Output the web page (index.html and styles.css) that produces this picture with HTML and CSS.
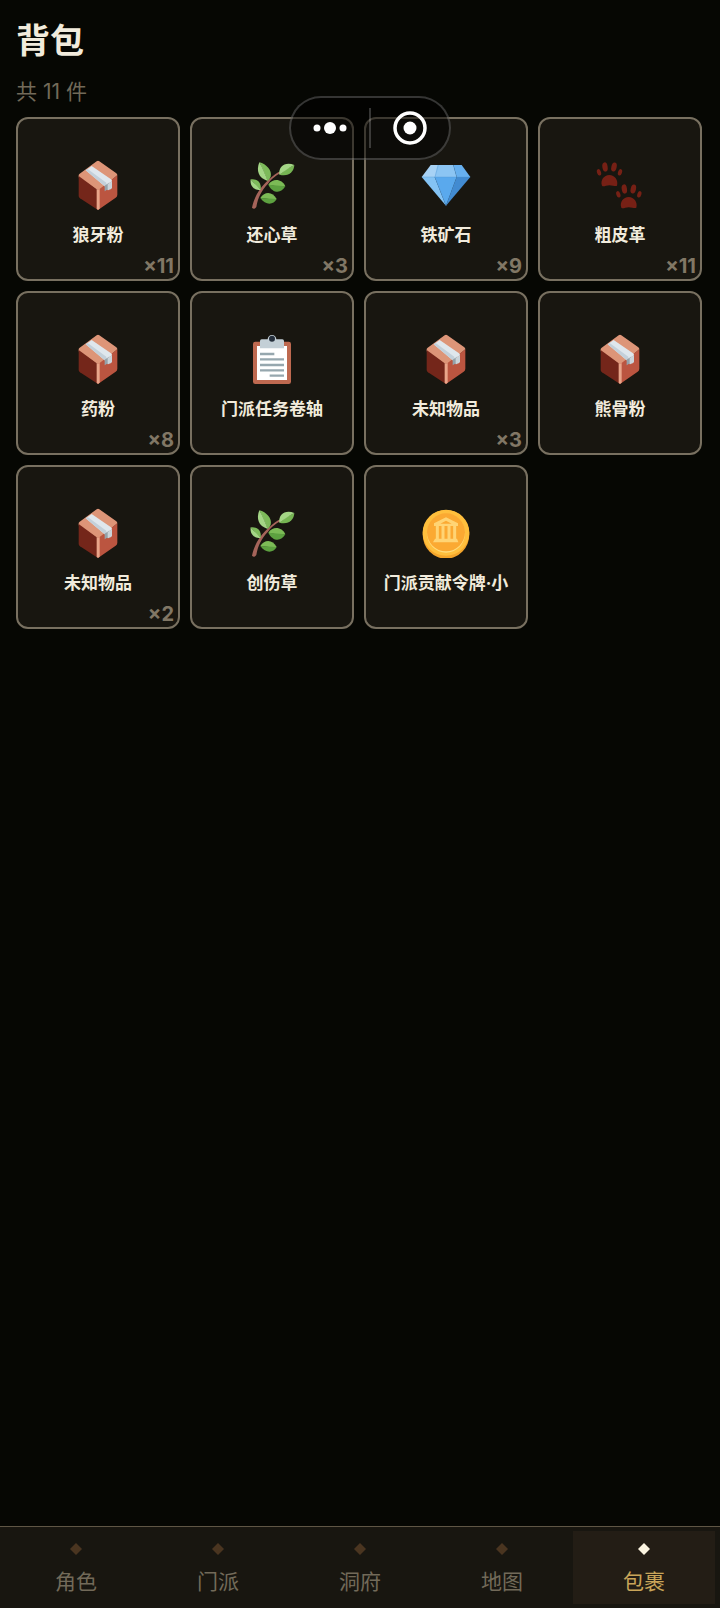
FILE: index.html
```html
<!DOCTYPE html>
<html lang="zh-CN">
<head>
  <meta charset="UTF-8">
  <meta name="viewport" content="width=device-width, initial-scale=1.0">
  <title>背包</title>
  <link rel="stylesheet" href="styles.css">
</head>
<body>
  <!-- Item icons -->
  <svg class="sprite" aria-hidden="true">
    <symbol id="icon-box" viewBox="15 30 150 150">
      <path fill="#dd9578" d="M86 34Q90 31 94 34L145 70Q148 73 148 76L92 124 32 82V76Q32 73 35 71Z"/>
      <path fill="#74261a" d="M32 78 90 121V180L36 145Q32 142 32 138Z"/>
      <path fill="#bb5540" d="M90 121 148 76V134Q148 140 143 143L90 180Z"/>
      <path fill="#e9a58a" d="M86 117 90 120 95 117V176L90 180 86 177Z"/>
      <path fill="#dfe7ed" d="M53 61 71 48 129 88Q132 90 132 94L110 109Z"/>
      <path fill="#c3d0da" d="M53 61 59 57 115 98V106L110 109Z"/>
      <path fill="#94a2aa" d="M110 107 123 98V121L117 119 110 124Z"/>
      <path fill="#cbd4da" d="M119 102 132 93V112Q132 116 128 118L119 121Z"/>
    </symbol>
    <symbol id="icon-herb" viewBox="21 30 150 150">
      <path fill="#a5645a" d="M36 173C44 135 64 108 86 89 100 77 111 67 124 63L127 67C108 76 96 86 84 101 64 122 54 142 49 171Q43 180 36 173Z"/>
      <path fill="#7dba5a" d="M58 37C79 42 97 62 92 80Q89 88 83 93C76 77 68 57 58 37Z"/>
      <path fill="#a4d686" d="M58 37C68 54 77 77 83 93 55 84 48 62 58 37Z"/>
      <path fill="#76b553" d="M163 45C162 66 146 81 118 74L138 58Z"/>
      <path fill="#a4d686" d="M118 74C115 49 136 34 163 45 146 54 132 64 118 74Z"/>
      <path fill="#7dba5a" d="M32 88C53 85 65 100 62 119L47 106Z"/>
      <path fill="#a4d686" d="M32 88C41 99 52 109 62 119 44 123 29 109 32 88Z"/>
      <path fill="#7cbb56" d="M85 104C98 84 126 86 136 109L109 109Z"/>
      <path fill="#5da140" d="M85 104 136 109C124 131 99 132 85 104Z"/>
      <path fill="#7cbb56" d="M61 144C74 123 98 124 110 147L87 147Z"/>
      <path fill="#5da140" d="M61 144 110 147C100 166 76 166 61 144Z"/>
    </symbol>
    <symbol id="icon-gem" viewBox="27 30 150 150">
      <path fill="#a7d2f5" d="M56 45H82L70 81H29Z"/>
      <path fill="#8cc5f3" d="M76 45H124L134 81H68Z"/>
      <path fill="#67b0ef" d="M124 45H149L175 81H134Z"/>
      <path fill="#84c3f4" d="M29 81H68L102 167Z"/>
      <path fill="#5aa9ed" d="M68 81H134L102 167Z"/>
      <path fill="#428bd1" d="M134 81H175L102 167Z"/>
      <path fill="none" stroke="#4c93cf" d="M29 81H175M79 45 69 81 102 167 134 81 124 45"/>
    </symbol>
    <symbol id="icon-paws" viewBox="15 30 150 150">
      <g id="paw" fill="#762015">
        <ellipse cx="45" cy="51" rx="8" ry="14" transform="rotate(-8 45 51)"/>
        <ellipse cx="72" cy="51" rx="8" ry="14" transform="rotate(12 72 51)"/>
        <ellipse cx="27" cy="67" rx="6" ry="10" transform="rotate(-18 27 67)"/>
        <ellipse cx="90" cy="67" rx="6" ry="10" transform="rotate(18 90 67)"/>
        <path d="M36 107C30 91 42 75 58 75S86 91 81 107Q78 109 69 107 58 105 48 107 39 110 36 107Z"/>
      </g>
      <use href="#paw" x="58" y="66"/>
    </symbol>
    <symbol id="icon-clipboard" viewBox="15 27 150 150">
      <rect x="33" y="50" width="114" height="127" rx="7" fill="#be6950"/>
      <path fill="#fff" d="M45 63H135V165H45Z"/>
      <path fill="#c3cfd6" d="M54 48Q54 43 59 43H77A13 13 0 0 1 103 43H121Q126 43 126 48V70H54Z"/>
      <circle cx="90" cy="41" r="9" fill="#252f3c"/>
      <path fill="none" stroke="#96a7ae" stroke-width="7" d="M54 87H97M54 103H126M54 120H126M54 136H126M83 152H126"/>
    </symbol>
    <symbol id="icon-coin" viewBox="18 22 150 150">
      <ellipse cx="93" cy="101" rx="70" ry="73" fill="#f4a52b"/>
      <ellipse cx="93" cy="96" rx="70" ry="69" fill="#ffbf3d"/>
      <ellipse cx="93" cy="98" rx="57" ry="58" fill="#ffdc7c"/>
      <ellipse cx="93" cy="95" rx="57" ry="57" fill="#fba932"/>
      <path fill="#ffd474" fill-rule="evenodd" d="M93 50 129 68V76H57V68ZM93 60 76 69H110Z"/>
      <path fill="none" stroke="#ffd474" stroke-width="9" d="M67 76V116M84 76V116M102 76V116M119 76V116"/>
      <path fill="#ffd474" d="M60 114H126L130 125H54Z"/>
    </symbol>
    <symbol id="icon-diamond" viewBox="0 0 12 12">
      <path fill="currentColor" d="M6 0 12 6 6 12 0 6Z"/>
    </symbol>
  </svg>

  <div class="capsule">
    <button type="button" class="capsule-btn" aria-label="更多">
      <svg width="34" height="12" viewBox="0 0 34 12" fill="#fff"><circle cx="4" cy="6" r="3.5"/><circle cx="17" cy="6" r="6"/><circle cx="30" cy="6" r="3.5"/></svg>
    </button>
    <span class="capsule-line"></span>
    <button type="button" class="capsule-btn" aria-label="关闭">
      <svg width="34" height="34" viewBox="0 0 34 34"><circle cx="17" cy="17" r="15" fill="none" stroke="#fff" stroke-width="3.5"/><circle cx="17" cy="17" r="6.5" fill="#fff"/></svg>
    </button>
  </div>

  <main class="bag">
    <h1>背包</h1>
    <p class="total">共 11 件</p>
    <div class="items">
      <button type="button" class="item"><svg class="item-icon"><use href="#icon-box"/></svg><span class="item-name">狼牙粉</span><span class="item-count">×11</span></button>
      <button type="button" class="item"><svg class="item-icon"><use href="#icon-herb"/></svg><span class="item-name">还心草</span><span class="item-count">×3</span></button>
      <button type="button" class="item"><svg class="item-icon"><use href="#icon-gem"/></svg><span class="item-name">铁矿石</span><span class="item-count">×9</span></button>
      <button type="button" class="item"><svg class="item-icon"><use href="#icon-paws"/></svg><span class="item-name">粗皮革</span><span class="item-count">×11</span></button>
      <button type="button" class="item"><svg class="item-icon"><use href="#icon-box"/></svg><span class="item-name">药粉</span><span class="item-count">×8</span></button>
      <button type="button" class="item"><svg class="item-icon"><use href="#icon-clipboard"/></svg><span class="item-name">门派任务卷轴</span></button>
      <button type="button" class="item"><svg class="item-icon"><use href="#icon-box"/></svg><span class="item-name">未知物品</span><span class="item-count">×3</span></button>
      <button type="button" class="item"><svg class="item-icon"><use href="#icon-box"/></svg><span class="item-name">熊骨粉</span></button>
      <button type="button" class="item"><svg class="item-icon"><use href="#icon-box"/></svg><span class="item-name">未知物品</span><span class="item-count">×2</span></button>
      <button type="button" class="item"><svg class="item-icon"><use href="#icon-herb"/></svg><span class="item-name">创伤草</span></button>
      <button type="button" class="item"><svg class="item-icon"><use href="#icon-coin"/></svg><span class="item-name">门派贡献令牌·小</span></button>
    </div>
  </main>

  <nav class="tabs">
    <a href="#role"><svg class="tab-mark"><use href="#icon-diamond"/></svg>角色</a>
    <a href="#sect"><svg class="tab-mark"><use href="#icon-diamond"/></svg>门派</a>
    <a href="#cave"><svg class="tab-mark"><use href="#icon-diamond"/></svg>洞府</a>
    <a href="#map"><svg class="tab-mark"><use href="#icon-diamond"/></svg>地图</a>
    <a href="#bag" class="active"><svg class="tab-mark"><use href="#icon-diamond"/></svg>包裹</a>
  </nav>
</body>
</html>
```
FILE: styles.css
```css
* { box-sizing:border-box; }
body { margin:0; min-height:100vh; display:flex; flex-direction:column; background:#060703; color:#f1ebdc; font-family:Inter, "Noto Sans CJK SC", sans-serif; }
button { font:inherit; color:inherit; cursor:pointer; }
.sprite { position:absolute; width:0; height:0; }

.bag { flex:1; padding:19px 18px 20px 16px; }
.bag h1 { margin:0; font-size:34px; line-height:44px; font-weight:700; }
.total { margin:14px 0 10px; font-size:21px; line-height:30px; font-weight:400; color:#726a59; }
.items { display:grid; grid-template-columns:repeat(4, 1fr); gap:10px; }
.item { position:relative; display:flex; flex-direction:column; align-items:center; justify-content:center; gap:13px; min-width:0; aspect-ratio:1; padding:9px 0 0; background:#181610; border:2px solid #787060; border-radius:12px; }
.item-icon { width:50px; height:50px; }
.item-name { font-size:17px; line-height:24px; font-weight:700; white-space:nowrap; }
.item-count { position:absolute; right:4px; bottom:1px; font-size:20px; line-height:24px; font-weight:700; color:#817765; }

/* Floating capsule menu */
.capsule { position:fixed; top:96px; left:289px; display:flex; align-items:center; width:162px; height:64px; background:rgba(0,0,0,0.5); border:2px solid rgba(255,255,255,0.2); border-radius:32px; z-index:2; }
.capsule-btn { flex:1; display:flex; align-items:center; justify-content:center; height:100%; padding:0; background:none; border:none; }
.capsule-line { width:2px; height:40px; background:rgba(255,255,255,0.2); }

/* Bottom tabs */
.tabs { position:sticky; bottom:0; display:flex; padding:4px 5px; background:#181610; border-top:1px solid #5f5645; }
.tabs a { flex:1; display:flex; flex-direction:column; align-items:center; gap:10px; padding:12px 0 5px; font-size:21px; line-height:34px; font-weight:400; color:#726a59; text-decoration:none; }
.tabs a.active { background:#231d15; color:#c9a559; }
.tab-mark { width:12px; height:12px; color:#4a3520; }
.active .tab-mark { color:#fbf4e0; }
```
